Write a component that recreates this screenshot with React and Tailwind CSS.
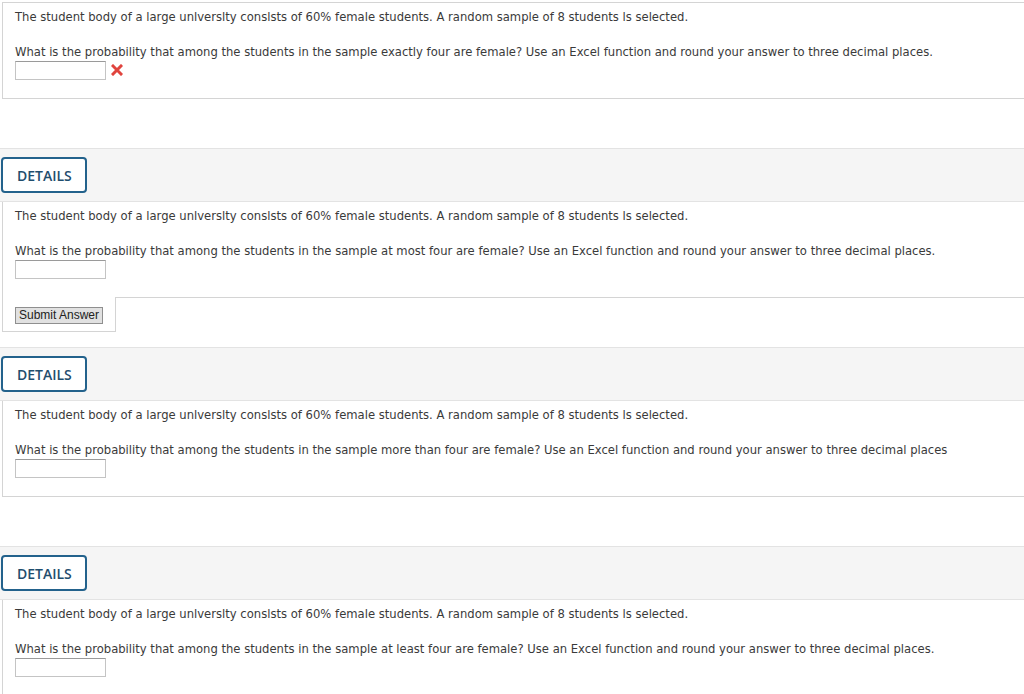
const bodyFont = { fontFamily: "'DejaVu Sans', sans-serif" };

const intro =
  "The student body of a large unlverslty conslsts of 60% female students. A random sample of 8 students ls selected.";

function DetailsBand() {
  return (
    <div className="flex border-y border-[#e3e3e3] bg-[#f5f5f5] pt-[8px] pb-[8px]">
      <button className="ml-[1px] h-[36px] w-[86px] rounded-[4px] border-2 border-[#23628c] bg-white text-left pl-[14px] font-['Open_Sans',sans-serif] text-[14px] font-semibold text-[#1f4e6e]">
        DETAILS
      </button>
    </div>
  );
}

function AnswerInput() {
  return (
    <input
      className="mt-[2px] block h-[19px] w-[91px] border border-[#c4c4c4] border-t-[#9a9a9a] bg-white"
      type="text"
    />
  );
}

function Question({ text }) {
  return (
    <div className="text-[11.6px] leading-[14px] text-[#3a3a3a]" style={bodyFont}>
      <p>{intro}</p>
      <p className="mt-[21px]">{text}</p>
    </div>
  );
}

function WrongMark() {
  return (
    <svg width="12" height="12" viewBox="0 0 12 12" className="ml-[5px] mt-[5px]">
      <path d="M2 2 L10 10 M10 2 L2 10" stroke="#e0443e" strokeWidth="3" strokeLinecap="square" />
    </svg>
  );
}

export default function App() {
  return (
    <div className="min-h-[694px] w-[1024px] overflow-hidden bg-white">
      {/* previous question, cut off at the top */}
      <div className="ml-[2px] mt-[2px] border border-r-0 border-[#d4d4d4] pl-[12px] pt-[7px] pb-[18px]">
        <Question text="What is the probability that among the students in the sample exactly four are female? Use an Excel function and round your answer to three decimal places." />
        <div className="flex">
          <AnswerInput />
          <WrongMark />
        </div>
      </div>

      <div className="mt-[49px]">
        <DetailsBand />
        <div className="ml-[2px] border-l border-[#d4d4d4] pl-[12px] pt-[7px] pb-[18px]">
          <Question text="What is the probability that among the students in the sample at most four are female? Use an Excel function and round your answer to three decimal places." />
          <AnswerInput />
        </div>
        <div className="flex">
          <div className="ml-[2px] h-[35px] w-[114px] border-x border-b border-[#d4d4d4] pl-[12px] pt-[10px]">
            <button className="block h-[17px] w-[88px] border border-[#8f8f8f] bg-[#e1e1e1] font-['Liberation_Sans',Arial,sans-serif] text-[12px] leading-[15px] text-[#222]">
              Submit Answer
            </button>
          </div>
          <div className="flex-1 border-t border-[#d4d4d4]" />
        </div>
      </div>

      <div className="mt-[15px]">
        <DetailsBand />
        <div className="ml-[2px] border-l border-b border-[#d4d4d4] pl-[12px] pt-[7px] pb-[18px]">
          <Question text="What is the probability that among the students in the sample more than four are female? Use an Excel function and round your answer to three decimal places" />
          <AnswerInput />
        </div>
      </div>

      <div className="mt-[49px]">
        <DetailsBand />
        <div className="ml-[2px] border-l border-[#d4d4d4] pl-[12px] pt-[7px] pb-[18px]">
          <Question text="What is the probability that among the students in the sample at least four are female? Use an Excel function and round your answer to three decimal places." />
          <AnswerInput />
        </div>
      </div>
    </div>
  );
}
